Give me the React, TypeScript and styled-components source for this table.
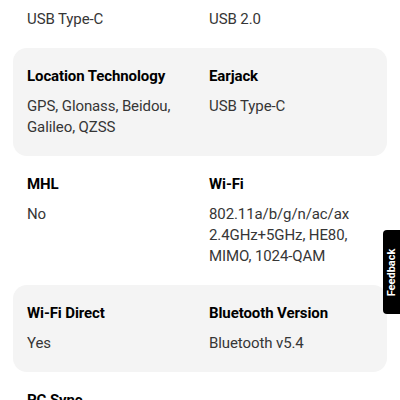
import React from 'react';
import styled, { createGlobalStyle } from 'styled-components';

const GlobalStyle = createGlobalStyle`
    html, body {
        margin: 0;
        padding: 0;
        background: #fff;
        overflow: hidden;
    }
    body {
        font-family: Roboto, 'Liberation Sans', sans-serif;
        -webkit-font-smoothing: antialiased;
    }
`;

const Page = styled.div`
    width: 400px;
    height: 400px;
    overflow: hidden;
    position: relative;
`;

const SpecList = styled.div`
    display: flex;
    flex-direction: column;
    padding: 0 13px;
`;

const SpecRow = styled.div<{ $shaded?: boolean; $clipped?: boolean }>`
    display: grid;
    grid-template-columns: 182px 1fr;
    padding: ${({ $clipped }) => ($clipped ? '9px 14px 18px' : '18px 14px')};
    border-radius: 14px;
    background: ${({ $shaded }) => ($shaded ? '#f4f4f4' : 'transparent')};
`;

const SpecItem = styled.div`
    display: flex;
    flex-direction: column;
    gap: 9px;
    padding-right: 12px;
`;

const Label = styled.div`
    font-size: 15px;
    line-height: 21px;
    font-weight: 700;
    color: #000;
    letter-spacing: -0.1px;
`;

const Value = styled.div`
    font-size: 15px;
    line-height: 21px;
    font-weight: 400;
    color: #363636;
    letter-spacing: -0.1px;
`;

const FeedbackTab = styled.button`
    position: absolute;
    right: 0;
    top: 230px;
    width: 17px;
    height: 84px;
    border: none;
    padding: 0;
    background: #000;
    border-radius: 4px 0 0 4px;
    display: flex;
    align-items: center;
    justify-content: center;
    cursor: pointer;

    span {
        transform: rotate(-90deg);
        color: #fff;
        font-family: Roboto, 'Liberation Sans', sans-serif;
        font-size: 11px;
        font-weight: 700;
        white-space: nowrap;
    }
`;

interface Spec {
    label?: string;
    value: string[];
}

const specs: Spec[][] = [
    [{ value: ['USB Type-C'] }, { value: ['USB 2.0'] }],
    [
        { label: 'Location Technology', value: ['GPS, Glonass, Beidou,', 'Galileo, QZSS'] },
        { label: 'Earjack', value: ['USB Type-C'] },
    ],
    [
        { label: 'MHL', value: ['No'] },
        { label: 'Wi-Fi', value: ['802.11a/b/g/n/ac/ax', '2.4GHz+5GHz, HE80,', 'MIMO, 1024-QAM'] },
    ],
    [
        { label: 'Wi-Fi Direct', value: ['Yes'] },
        { label: 'Bluetooth Version', value: ['Bluetooth v5.4'] },
    ],
    [{ label: 'PC Sync', value: ['Smart Switch'] }],
];

export default function App() {
    return (
        <Page>
            <GlobalStyle />
            <SpecList>
                {specs.map((row, i) => (
                    <SpecRow $shaded={i % 2 === 1} $clipped={i === 0} key={i}>
                        {row.map((item, j) => (
                            <SpecItem key={j}>
                                {item.label && <Label>{item.label}</Label>}
                                <Value>
                                    {item.value.map((line) => (
                                        <div key={line}>{line}</div>
                                    ))}
                                </Value>
                            </SpecItem>
                        ))}
                    </SpecRow>
                ))}
            </SpecList>
            <FeedbackTab>
                <span>Feedback</span>
            </FeedbackTab>
        </Page>
    );
}
